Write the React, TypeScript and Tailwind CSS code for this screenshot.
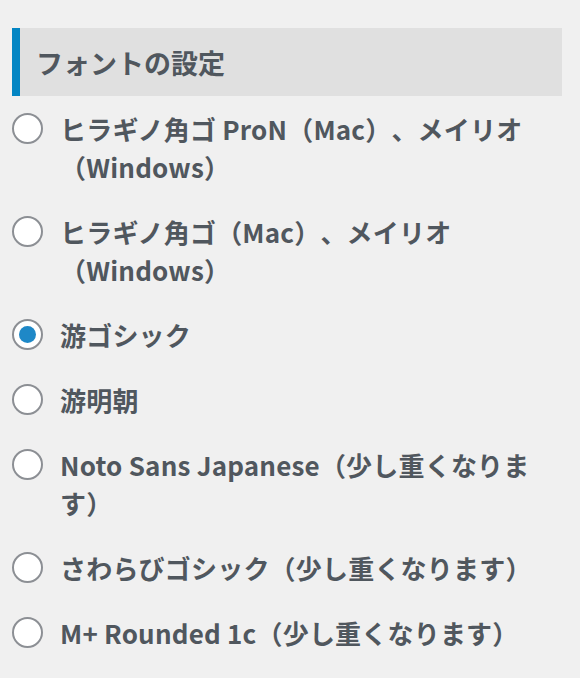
import React from "react"

const options = [
  "ヒラギノ角ゴ ProN（Mac）、メイリオ（Windows）",
  "ヒラギノ角ゴ（Mac）、メイリオ（Windows）",
  "游ゴシック",
  "游明朝",
  "Noto Sans Japanese（少し重くなります）",
  "さわらびゴシック（少し重くなります）",
  "M+ Rounded 1c（少し重くなります）",
]

export default function App() {
  const [selected, setSelected] = React.useState(2)
  return (
    <div
      className="min-h-[678px] bg-[#f0f0f0] pl-3 pr-[18px] pt-7 text-[#50575e] [text-spacing-trim:space-all]"
      style={{ fontFamily: '"Noto Sans CJK JP", "Noto Sans", sans-serif' }}
    >
      <div className="flex h-[68px] items-center border-l-8 border-[#0385c3] bg-[#e0e0e0] pl-4">
        <h2 className="text-[27px] font-bold leading-none">フォントの設定</h2>
      </div>

      <div className="mt-[14px] flex flex-col gap-[27px]">
        {options.map((label, i) => (
          <label key={i} className="flex cursor-pointer items-start gap-[17px]">
            <span className="mt-[3px] flex h-[31px] w-[31px] shrink-0 items-center justify-center rounded-full border-2 border-[#8c8f94] bg-white">
              {selected === i && <span className="h-[17px] w-[17px] rounded-full bg-[#1e88c7]" />}
            </span>
            <input
              type="radio"
              name="font"
              className="hidden"
              checked={selected === i}
              onChange={() => setSelected(i)}
            />
            <span className="w-[478px] text-[26px] font-bold leading-[38px] tracking-[0.2px]">{label}</span>
          </label>
        ))}
      </div>
    </div>
  )
}
